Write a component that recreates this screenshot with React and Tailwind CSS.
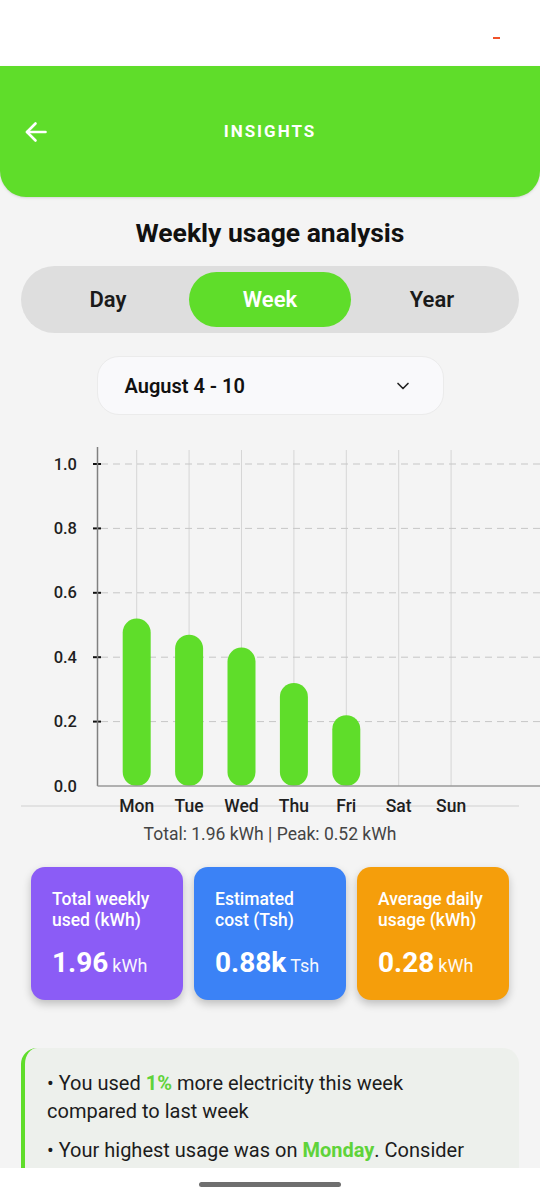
import { ChevronDown } from 'lucide-react'

const days = [
  { label: 'Mon', value: 0.52 },
  { label: 'Tue', value: 0.47 },
  { label: 'Wed', value: 0.43 },
  { label: 'Thu', value: 0.32 },
  { label: 'Fri', value: 0.22 },
  { label: 'Sat', value: 0 },
  { label: 'Sun', value: 0 },
]

const ticks = [1.0, 0.8, 0.6, 0.4, 0.2, 0.0]

const cards = [
  { title: ['Total weekly', 'used (kWh)'], value: '1.96', unit: 'kWh', bg: 'bg-[#8b5cf6]' },
  { title: ['Estimated', 'cost (Tsh)'], value: '0.88k', unit: 'Tsh', bg: 'bg-[#3b82f6]' },
  { title: ['Average daily', 'usage (kWh)'], value: '0.28', unit: 'kWh', bg: 'bg-[#f59e0b]' },
]

// chart geometry (svg coordinates)
const AXIS_X = 97.5
const BASE_Y = 346
const SCALE = 322
const colX = (i) => 136.7 + i * 52.4
const valY = (v) => BASE_Y - v * SCALE

const UsageChart = () => (
  <svg width="540" height="380" viewBox="0 0 540 380" className="block">
    {/* vertical grid */}
    {days.map((d, i) => (
      <line key={d.label} x1={colX(i)} x2={colX(i)} y1="10" y2={BASE_Y} stroke="#d6d6d6" strokeWidth="1" />
    ))}
    {/* horizontal dashed grid + ticks */}
    {ticks.slice(0, 5).map((t) => (
      <g key={t}>
        <line x1="101" x2="540" y1={valY(t)} y2={valY(t)} stroke="#c6c6c6" strokeWidth="1" strokeDasharray="7 5" />
        <line x1="93" x2="101" y1={valY(t)} y2={valY(t)} stroke="#111" strokeWidth="2" />
      </g>
    ))}
    {/* y labels */}
    {ticks.map((t) => (
      <text
        key={t}
        x="77"
        y={valY(t)}
        textAnchor="end"
        dominantBaseline="central"
        fontFamily="Roboto, sans-serif"
        fontSize="16.5"
        fontWeight="500"
        fill="#1f1f1f"
      >
        {t.toFixed(1)}
      </text>
    ))}
    {/* bars */}
    {days.map((d, i) =>
      d.value > 0 ? (
        <rect
          key={d.label}
          x={colX(i) - 14}
          y={valY(d.value)}
          width="28"
          height={d.value * SCALE}
          rx="14"
          fill="#5fdd2a"
        />
      ) : null
    )}
    {/* axes */}
    <line x1={AXIS_X} x2={AXIS_X} y1="7" y2={BASE_Y} stroke="#808080" strokeWidth="1.5" />
    <line x1={AXIS_X} x2="540" y1={BASE_Y} y2={BASE_Y} stroke="#9a9a9a" strokeWidth="1.5" />
    {/* divider under chart */}
    <line x1="21" x2="519" y1="366" y2="366" stroke="#dcdcdc" strokeWidth="1.5" />
    {/* x labels */}
    {days.map((d, i) => (
      <text
        key={d.label}
        x={colX(i)}
        y="366"
        textAnchor="middle"
        dominantBaseline="central"
        fontFamily="Roboto, sans-serif"
        fontSize="17.5"
        fontWeight="500"
        fill="#1f1f1f"
      >
        {d.label}
      </text>
    ))}
  </svg>
)

export default function App() {
  return (
    <div className="w-[540px] h-[1200px] flex flex-col overflow-hidden bg-[#f4f4f4] font-['Roboto',sans-serif]">
      {/* Status bar */}
      <div className="h-[66px] shrink-0 bg-white flex justify-end pr-[40px] pt-[37px]">
        <span className="w-[7px] h-[2px] bg-[#f0522a]" />
      </div>

      {/* Header */}
      <header className="h-[131px] shrink-0 bg-[#5fdd2a] rounded-b-[26px] flex items-center px-[25px] shadow-sm">
        <svg width="22" height="22" viewBox="0 0 22 22" fill="none" stroke="white" strokeWidth="2.6" strokeLinecap="round" strokeLinejoin="round">
          <path d="M20.5 11H2" />
          <path d="M10.5 2.5L2 11l8.5 8.5" />
        </svg>
        <h1 className="flex-1 text-center pr-[22px] text-white font-bold text-[17px] tracking-[2px]">INSIGHTS</h1>
      </header>

      {/* Content */}
      <main className="flex-1 min-h-0 overflow-hidden flex flex-col items-center pt-[20px]">
        <h2 className="shrink-0 text-[26.5px] leading-[32px] font-bold text-[#111]">Weekly usage analysis</h2>

        <div className="shrink-0 mt-[17px] w-[498px] h-[67px] rounded-full bg-[#dedede] p-[6px] grid grid-cols-3">
          <button className="rounded-full text-[22px] font-semibold text-[#1a1a1a]">Day</button>
          <button className="rounded-full bg-[#5fdd2a] text-[22px] font-semibold text-white">Week</button>
          <button className="rounded-full text-[22px] font-semibold text-[#1a1a1a]">Year</button>
        </div>

        <div className="shrink-0 mt-[23px] w-[347px] h-[59px] rounded-[22px] bg-[#f9f9fb] border border-[#ebebeb] flex items-center justify-between pl-[27px] pr-[30px]">
          <span className="text-[20px] font-semibold text-[#111]">August 4 - 10</span>
          <ChevronDown size={20} strokeWidth={2} className="text-[#222]" />
        </div>

        <div className="shrink-0 mt-[25px] self-stretch">
          <UsageChart />
        </div>

        <p className="shrink-0 text-[17.5px] leading-[22px] text-[#444] mt-[3px]">Total: 1.96 kWh | Peak: 0.52 kWh</p>

        <div className="shrink-0 mt-[22px] flex gap-[11px]">
          {cards.map((c) => (
            <div key={c.value} className={`${c.bg} w-[152px] h-[133px] rounded-[14px] pt-[22px] px-[21px] text-white shadow-[0_4px_8px_rgba(0,0,0,0.22)]`}>
              <p className="text-[17.5px] leading-[21px] font-medium">
                {c.title[0]}
                <br />
                {c.title[1]}
              </p>
              <p className="mt-[15px] leading-[34px]">
                <span className="text-[28px] font-bold">{c.value}</span>{' '}
                <span className="text-[18px] opacity-95">{c.unit}</span>
              </p>
            </div>
          ))}
        </div>

        <div className="shrink-0 mt-[48px] w-[498px] bg-[#edf0ec] border-l-4 border-[#5fdd2a] rounded-2xl pt-[21px] pl-[22px] pr-[34px] pb-[20px] text-[20px] leading-[28px] text-[#1c1c1c]">
          <p>
            • You used <span className="font-bold text-[#5fd33a]">1%</span> more electricity this week compared to last week
          </p>
          <p className="mt-[11px]">
            • Your highest usage was on <span className="font-bold text-[#5fd33a]">Monday</span>. Consider shifting some usage to other days
          </p>
        </div>
      </main>

      {/* Gesture bar */}
      <div className="h-[32px] shrink-0 bg-white flex justify-center pt-[14px]">
        <span className="w-[142px] h-[5px] rounded-full bg-[#6f6f6f]" />
      </div>
    </div>
  )
}
